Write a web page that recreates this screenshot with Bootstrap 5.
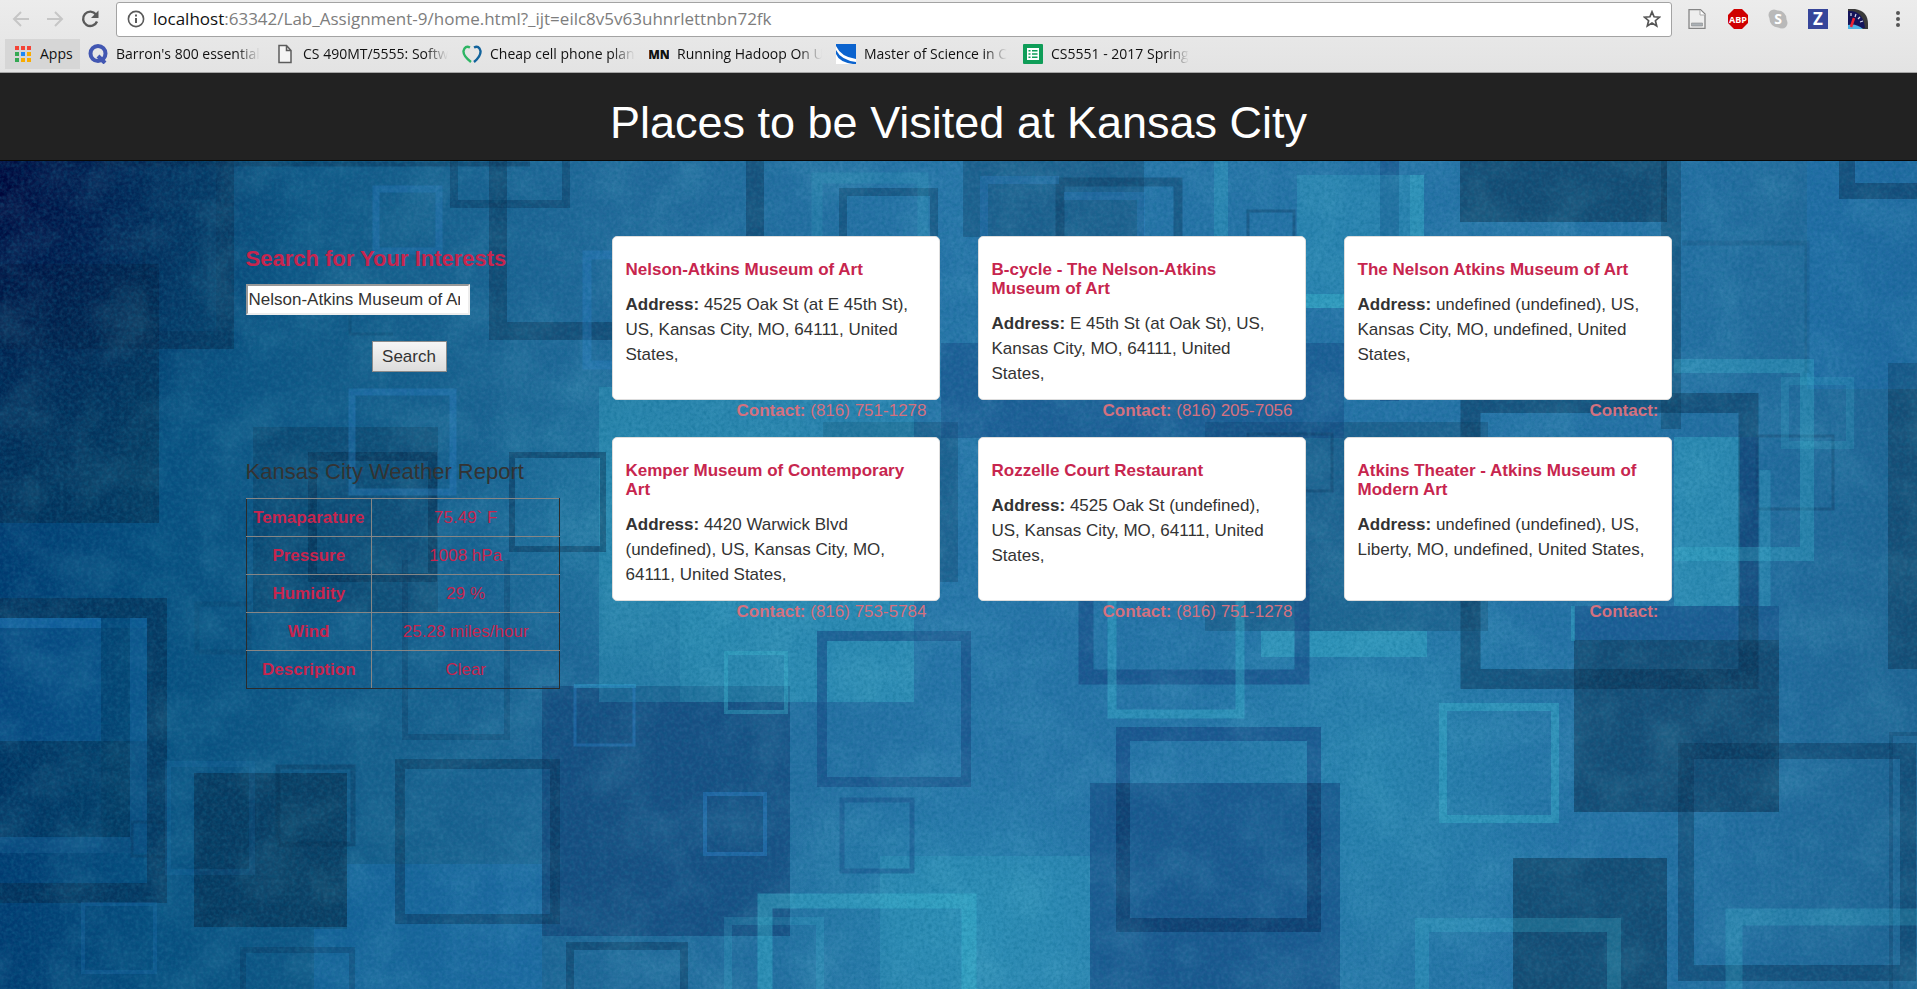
<!DOCTYPE html>
<html lang="en">
<head>
<meta charset="utf-8">
<meta name="viewport" content="width=device-width, initial-scale=1">
<title>Places to be Visited at Kansas City</title>
<link href="https://cdn.jsdelivr.net/npm/bootstrap@5.3.0/dist/css/bootstrap.min.css" rel="stylesheet">
<style>
  body { font-family: "Liberation Sans", Arial, sans-serif; font-size: 17px; line-height: 25px; color: #333; }

  /* browser toolbar */
  .chrome-bar { background: linear-gradient(#ececec, #e3e3e3); border-bottom: 1px solid #a5a5a5; font-family: "Open Sans", sans-serif; color: #111; }
  .tool-row { height: 38px; padding: 0 5px 0 12px; }
  .tool-btn { border: 0; background: none; padding: 0; line-height: 0; }
  .omnibox { height: 35px; background: #fff; border: 1px solid #a3a3a3; border-radius: 3px; padding: 0 10px; font-size: 17px; line-height: 24px; color: #7d7d7d; }
  .omnibox b { font-weight: 400; color: #111; }
  .ext-icons { gap: 20px; }
  .mark-row { height: 34px; padding: 1px 5px 3px; font-size: 14px; line-height: 20px; }
  .mark-row a { color: #111; text-decoration: none; }
  .apps-link { background: #d6d6d6; width: 75px; height: 30px; padding-left: 10px; }
  .site-link { width: 187px; padding-left: 8px; padding-right: 6px; }
  .site-link span { overflow: hidden; white-space: nowrap; -webkit-mask-image: linear-gradient(90deg, #000 84%, transparent); mask-image: linear-gradient(90deg, #000 84%, transparent); }
  .site-link svg { flex: none; }

  /* page */
  .page-head { background: #222; border-bottom: 1px solid #080808; padding: 25px 0 12px; }
  .page-head h1 { font-size: 45px; line-height: 50px; font-weight: 400; color: #fff; }
  .scene { background: #23699e; overflow: hidden; }
  .backdrop { inset: 0; width: 100%; height: 100%; }
  .wrap { max-width: 1464px; --bs-gutter-x: 38px; padding-top: 75px; }
  .wrap .row { --bs-gutter-x: 38px; }
  .crimson { color: #c7254e; }
  .side-head { font-size: 22px; line-height: 25px; }
  .search-form { padding-top: 10px; }
  .search-form label { margin-bottom: 13px; }
  .query { width: 224px; height: 31px; border: 2px solid; border-color: #999 #ededed #ededed #999; border-radius: 0; background: #fff; color: #333; padding: 0 8px 0 1px; }
  .go-line { padding: 26px 0 0 126px; }
  .go { width: 75px; height: 31px; border: 1px solid #8c8c8c; background: linear-gradient(#f6f6f6, #dcdcdc); color: #333; padding: 0; }
  .weather-head { margin: 87px 0 14px; }
  .weather { width: 96%; border: 1px solid #2b2b2b; border-collapse: collapse; text-align: center; color: #c7254e; }
  .weather th, .weather td { height: 38px; border: 1px solid #868686; }
  .weather tr > :first-child { width: 40%; border-left-color: #2b2b2b; }
  .weather tr > :last-child { border-right-color: #2b2b2b; }
  .weather tr:last-child > * { border-bottom-color: #2b2b2b; }
  .place { height: 164px; border: 1px solid #ddd; border-radius: 5px; background: #fff; padding: 23px 21px 11px 13px; }
  .place h2 { font-size: 17px; line-height: 19px; font-weight: 700; margin-bottom: 13px; }
  .contact { color: #d4717f; line-height: 22px; padding-right: 13px; margin-bottom: 15px; }
</style>
</head>
<body class="d-flex flex-column min-vh-100">

<header class="chrome-bar">
  <div class="tool-row d-flex align-items-center">
    <button class="tool-btn" aria-label="Back"><svg width="18" height="18" fill="none" stroke="#c6c6c6" stroke-width="2"><path d="M17 9H2M9 2L2 9l7 7"/></svg></button>
    <button class="tool-btn ms-3" aria-label="Forward"><svg width="18" height="18" fill="none" stroke="#c6c6c6" stroke-width="2"><path d="M1 9h15M9 2l7 7-7 7"/></svg></button>
    <button class="tool-btn ms-3" aria-label="Reload"><svg width="20" height="20" fill="none" stroke="#5a5a5a" stroke-width="2.4"><path d="M16 5.4A7.2 7.2 0 1 0 17 12.500"/><path d="M18.500 1.500v7.500H11z" fill="#5a5a5a" stroke="none"/></svg></button>
    <div class="omnibox d-flex align-items-center flex-grow-1 ms-3 me-3">
      <svg width="18" height="18" class="me-2" fill="none" stroke="#5a5a5a" stroke-width="1.6"><circle cx="9" cy="9" r="7.600"/><path d="M9 8v5M9 4.600v2" stroke-width="2"/></svg>
      <div class="flex-grow-1" role="textbox" aria-label="Address" contenteditable="true" spellcheck="false"><b>localhost</b>:63342/Lab_Assignment-9/home.html?_ijt=eilc8v5v63uhnrlettnbn72fk</div>
      <svg width="18" height="18" viewBox="0 0 18 18" fill="none" stroke="#555" stroke-width="1.700"><path d="M9 1.800l2.100 5 5.400.400-4.100 3.500 1.300 5.300L9 13.100 4.300 16l1.300-5.300L1.500 7.200l5.400-.400z"/></svg>
    </div>
    <div class="ext-icons d-flex align-items-center flex-shrink-0 pe-1">
      <button class="tool-btn" aria-label="Page tool"><svg width="20" height="20"><path d="M1 .700h11.500L17 5v14.300H1z" fill="#eee" stroke="#858585" stroke-width="1.300"/><path d="M12 1v5h5" fill="#fff" stroke="#aaa"/><path d="M3.500 14h11v3h-11z" fill="#aab0b5" stroke="#8b8b8b" stroke-width=".6"/></svg></button>
      <button class="tool-btn" aria-label="Ad blocker"><svg width="20" height="20"><path d="M6 0h8l6 6v8l-6 6H6l-6-6V6z" fill="#cf0000"/><text x="10" y="13.500" text-anchor="middle" font-family="Open Sans" font-weight="700" font-size="9" fill="#fff">ABP</text></svg></button>
      <button class="tool-btn" aria-label="Skype"><svg width="20" height="20"><circle cx="6" cy="6" r="5.500" fill="#b9b9b9"/><circle cx="14" cy="14" r="5.500" fill="#b9b9b9"/><circle cx="10" cy="10" r="8.500" fill="#b9b9b9"/><text x="10" y="15" text-anchor="middle" font-family="Open Sans" font-weight="700" font-size="14" fill="#fff">S</text></svg></button>
      <button class="tool-btn" aria-label="Z extension"><svg width="20" height="20"><path d="M0 0h20v20H0z" fill="#36459a"/><text x="10" y="16" text-anchor="middle" font-family="Open Sans" font-weight="700" font-size="17" fill="#fff">Z</text></svg></button>
      <button class="tool-btn" aria-label="Speed dial"><svg width="20" height="20"><path d="M0 0h7q13 2 13 15v5H0z" fill="#3a3a3a"/><path d="M0 2q15-1 17 17H0z" fill="#14145a"/><path d="M0 16q8-2 15 4H0z" fill="#4db4e6"/><path d="M3 18L6 9" stroke="#ee2232" stroke-width="2.500"/><path d="M3 4v3M8 5l-1 3M12 8l-2 2M15 12l-3 1" stroke="#dde" stroke-width="1.200"/></svg></button>
      <button class="tool-btn px-2" aria-label="Menu"><svg width="4" height="18" fill="#555"><circle cx="2" cy="3" r="2"/><circle cx="2" cy="9" r="2"/><circle cx="2" cy="15" r="2"/></svg></button>
    </div>
  </div>
  <nav class="mark-row d-flex align-items-center" aria-label="Bookmarks">
    <a href="#" class="apps-link d-flex align-items-center gap-2"><svg width="17" height="17"><g fill="#f44336"><path d="M0 0h4v4H0zM6 0h4v4H6zM12 0h4v4h-4z"/></g><path d="M0 6h4v4H0zM0 12h4v4H0z" fill="#34a853"/><path d="M6 6h4v4H6z" fill="#1e88f5"/><path d="M12 6h4v4h-4zM6 12h4v4H6zM12 12h4v4h-4z" fill="#f9ab00"/></svg>Apps</a>
    <a href="#" class="site-link d-flex align-items-center gap-2"><svg width="20" height="20" fill="none" stroke="#4257b2" stroke-width="4"><circle cx="10" cy="9.500" r="7.500"/><path d="M10 12l7 7"/></svg><span>Barron's 800 essential</span></a>
    <a href="#" class="site-link d-flex align-items-center gap-2"><svg width="20" height="20" fill="#f5f5f5" stroke="#5c5c5c" stroke-width="1.500"><path d="M4 1.500h7.500L16 6.500v12H4zM11.500 1.500v5H16"/></svg><span>CS 490MT/5555: Softw</span></a>
    <a href="#" class="site-link d-flex align-items-center gap-2"><svg width="20" height="20" fill="none" stroke-width="2.400"><path d="M9 18Q1 12 1.500 7 3 1 8 3.500" stroke="#2db564"/><path d="M12 18Q19 12 18.500 7 17 1 12 3.500" stroke="#12639c"/></svg><span>Cheap cell phone plan</span></a>
    <a href="#" class="site-link d-flex align-items-center gap-2"><svg width="20" height="20"><text x="10" y="15" text-anchor="middle" font-family="Open Sans" font-weight="800" font-size="12" fill="#111">MN</text></svg><span>Running Hadoop On U</span></a>
    <a href="#" class="site-link d-flex align-items-center gap-2"><svg width="20" height="20"><path d="M0 0h20v20H0z" fill="#0b63ce"/><path d="M0 2q5 11 20 13v3Q5 16 0 6zM0 10q3 8 17 10H0z" fill="#fff"/></svg><span>Master of Science in C</span></a>
    <a href="#" class="site-link d-flex align-items-center gap-2"><svg width="20" height="20"><rect width="20" height="20" rx="1" fill="#0f9d58"/><path d="M4 4h12v12H4z" fill="#fff"/><path d="M5.500 6h2v1.500h-2zM9 6h5.500v1.500H9zM5.500 9.200h2v1.500h-2zM9 9.200h5.500v1.500H9zM5.500 12.500h2V14h-2zM9 12.500h5.500V14H9z" fill="#0f9d58"/></svg><span>CS5551 - 2017 Spring</span></a>
  </nav>
</header>

<div class="page-head text-center"><h1 class="m-0">Places to be Visited at Kansas City</h1></div>

<main class="scene position-relative flex-grow-1">
  <svg class="backdrop position-absolute" viewBox="0 161 1917 828" preserveAspectRatio="xMidYMid slice" aria-hidden="true">
    <defs>
      <linearGradient id="base"><stop offset="0" stop-color="#013a70"/><stop offset=".08" stop-color="#074d7e"/><stop offset=".2" stop-color="#165c8a"/><stop offset=".32" stop-color="#226899"/><stop offset=".5" stop-color="#2874a8"/><stop offset=".85" stop-color="#2671a5"/><stop offset="1" stop-color="#216494"/></linearGradient>
      <radialGradient id="corner" gradientUnits="userSpaceOnUse" cx="0" cy="190" r="300"><stop offset="0" stop-color="#000035" stop-opacity=".9"/><stop offset="1" stop-color="#00204f" stop-opacity="0"/></radialGradient>
      <radialGradient id="glow"><stop offset="0" stop-color="#35b0c8" stop-opacity=".3"/><stop offset="1" stop-color="#35b0c8" stop-opacity="0"/></radialGradient>
      <filter id="grain" x="0" y="0" width="100%" height="100%"><feTurbulence type="fractalNoise" baseFrequency=".28" numOctaves="3" seed="4"/><feColorMatrix values="0 0 0 0 0  0 0 0 0 .12  0 0 0 0 .24  1.600 0 0 0 -.6"/></filter>
      <filter id="sparkle" x="0" y="0" width="100%" height="100%"><feTurbulence type="fractalNoise" baseFrequency=".25" numOctaves="3" seed="17"/><feColorMatrix values="0 0 0 0 .18  0 0 0 0 .56  0 0 0 0 .76  0 1.600 0 0 -.6"/></filter>
      <filter id="cloud" x="0" y="0" width="100%" height="100%"><feTurbulence type="fractalNoise" baseFrequency=".02" numOctaves="6" seed="9"/><feColorMatrix values="0 0 0 0 .2  0 0 0 0 .66  0 0 0 0 .8  0 1.800 0 0 -.75"/></filter>
    </defs>
    <rect y="161" width="1917" height="828" fill="url(#base)"/>
    <ellipse cx="660" cy="500" rx="200" ry="180" fill="url(#glow)"/>
    <ellipse cx="960" cy="920" rx="220" ry="150" fill="url(#glow)"/>
    <ellipse cx="1380" cy="780" rx="200" ry="260" fill="url(#glow)"/>
    <!-- darker solid blocks -->
    <g fill="#041f3a">
      <path d="M0 161h216v170H0z" opacity=".25"/><path d="M0 264h159v259H0z" opacity=".42"/><path d="M0 741h147v112H0z" opacity=".28"/>
      <path d="M253 427h185v185H253z" opacity=".25"/><path d="M194 773h153v154H194z" opacity=".48"/>
      <path d="M963 161h181v76H963z" opacity=".25"/><path d="M1460 161h207v61h-207z" opacity=".48"/>
      <path d="M1574 640h205v172h-205z" opacity=".46"/><path d="M1513 858h154v131h-154z" opacity=".48"/>
      <path d="M823 422h135v160H823zM1205 422h283v209h-283z" opacity=".22"/><path d="M1661 161h20v268h-20z" opacity=".28"/>
      <path d="M1888 363h29v306h-29z" opacity=".35"/><path d="M101 628h46v225h-46z" opacity=".12"/>
      <path d="M542 686h248v250H542z" opacity=".2"/>
    </g>
    <g fill="#123f7a">
      <path d="M542 686h248v250H542z" opacity=".42"/><path d="M1090 783h250v206h-250z" opacity=".55"/><path d="M1574 606h205v34h-205z" opacity=".4"/>
      <path d="M1380 161h19v240h-19z" opacity=".45"/><path d="M941 343h403v95H941z" opacity=".4"/><path d="M599 686h191v16H599z" opacity=".3"/>
    </g>
    <!-- lighter blocks -->
    <g fill="#39b4cc">
      <path d="M599 387h315v315H599z" opacity=".28"/><path d="M680 600h234v102H680z" opacity=".16"/><path d="M880 856h210v133H880z" opacity=".22"/>
      <path d="M1261 631h166v26h-166z" opacity=".45"/><path d="M1297 175h113v133h-113z" opacity=".26"/><path d="M1410 175h14v133h-14z" opacity=".5"/>
      <path d="M1674 437h66v169h-66z" opacity=".4"/><path d="M1214 161h14v75h-14z" opacity=".3"/><path d="M1306 294h40v14h-40z" opacity=".5"/>
    </g>
    <g fill="#1f7cc8">
      <path d="M347 864h195v125H314v-60h33z" opacity=".26"/><path d="M1807 161h110v228h-110z" opacity=".22"/><path d="M0 618h101v10H0z" opacity=".45"/>
      <path d="M130 618h17v235h-17zM0 837h130v16H0z" opacity=".28"/><path d="M0 628h101v113H0z" opacity=".16"/>
    </g>
    <!-- dark outlines -->
    <g fill="none" stroke="#06284a">
      <path d="M225 161v179H0" stroke-width="18" opacity=".5"/><path d="M0 608h157v285H0" stroke-width="20" opacity=".55"/>
      <path d="M498 161v170h257V161" stroke-width="18" opacity=".42"/><path d="M454 161v43h112v-43" stroke-width="8" opacity=".35"/>
      <path d="M843 236v-44h91v44" stroke-width="8" opacity=".35"/><path d="M312.500 456.500h120v121h-120z" stroke-width="9" opacity=".5"/>
      <path d="M512 455h91v94h-91z" stroke-width="6" opacity=".45"/><path d="M405 560v177h102V560" stroke-width="6" opacity=".25"/>
      <path d="M278 767h75v77h-75z" stroke-width="5" opacity=".3"/><path d="M400 764h155v155H400z" stroke-width="10" opacity=".42"/>
      <path d="M570 989v-43h114v43" stroke-width="8" opacity=".4"/><path d="M243 989v-39h109v39" stroke-width="6" opacity=".28"/>
      <path d="M1470.500 403h278v276h-278z" stroke-width="20" opacity=".45"/><path d="M1686 751h222v222h-222z" stroke-width="16" opacity=".4"/>
      <path d="M1847 161v30h70" stroke-width="16" opacity=".45"/><path d="M1060 236v-54h118v54" stroke-width="9" opacity=".35"/>
      <path d="M1757 436h76v73h-76zM1248 434h84v57h-84zM132 822h33v34h-33z" stroke-width="3" opacity=".28"/><path d="M1248 236v-25h46v25" stroke-width="3" opacity=".32"/>
      <path d="M1682 243h125v130M197 604h52v48h-52z" stroke-width="5" opacity=".15"/><path d="M1891 989V734h26" stroke-width="4" opacity=".25"/><path d="M350 284v50h43M100 239h44v44" stroke-width="3" opacity=".2"/>
      <path d="M95 164h435" stroke-width="5" opacity=".4"/>
    </g>
    <g fill="none" stroke="#174782">
      <path d="M822 636h144v146H822z" stroke-width="10" opacity=".6"/><path d="M842 800h70v71h-70z" stroke-width="5" opacity=".45"/>
      <path d="M1086 560v117h216V560" stroke-width="15" opacity=".65"/><path d="M1123 734h191v191h-191z" stroke-width="14" opacity=".65"/>
      <path d="M1749 437v169" stroke-width="18" opacity=".45"/>
    </g>
    <path d="M1123 783v142h191V783" fill="none" stroke="#06284a" stroke-width="14" opacity=".35"/>
    <!-- bright outlines -->
    <g fill="none" stroke="#3cb8d0">
      <path d="M765 989v-88h204v88" stroke-width="15" opacity=".45"/><path d="M728 989v-68h92v68" stroke-width="8" opacity=".22"/>
      <path d="M726 653h60v59h-60z" stroke-width="4" opacity=".38"/><path d="M1112 560v154h128V560" stroke-width="9" opacity=".42"/>
      <path d="M1443 707h112v112h-112z" stroke-width="8" opacity=".42"/><path d="M1422 989v-64h192v64" stroke-width="14" opacity=".28"/>
      <path d="M1734 989v-72h183" stroke-width="17" opacity=".28"/><path d="M1674 366h133v188h-133" stroke-width="14" opacity=".32"/>
      <path d="M1785 381h65v64h-65z" stroke-width="8" opacity=".2"/><path d="M1573 606v35M574 686h62" stroke-width="4" opacity=".4"/>
      <path d="M1765 470v136" stroke-width="11" opacity=".28"/><path d="M817 236v-58h106v58" stroke-width="11" opacity=".16"/>
    </g>
    <g fill="none" stroke="#2a7cc4">
      <path d="M376 189h63v62h-63z" stroke-width="7" opacity=".35"/><path d="M352 392h101v100H352z" stroke-width="7" opacity=".4"/>
      <path d="M613 255h-26v110h26" stroke-width="9" opacity=".4"/><path d="M705 794h60v60h-60z" stroke-width="4" opacity=".5"/>
      <path d="M575 686h59v59h-59z" stroke-width="3" opacity=".45"/><path d="M168 764h84v108h-84z" stroke-width="6" opacity=".14"/>
      <path d="M83 904h72v68H83z" stroke-width="4" opacity=".22"/><path d="M984 236v-56h75M1064 196h77v40" stroke-width="8" opacity=".35"/>
    </g>
    <rect y="161" width="1917" height="828" fill="url(#corner)"/>
    <rect y="161" width="1917" height="828" filter="url(#cloud)" opacity=".16"/>
    <rect y="161" width="1917" height="828" filter="url(#grain)" opacity=".4"/>
    <rect y="161" width="1917" height="828" filter="url(#sparkle)" opacity=".14"/>
  </svg>

  <div class="container-fluid wrap position-relative">
    <div class="row">
      <section class="col-3">
        <form onsubmit="return false" class="search-form">
          <label for="q" class="side-head crimson fw-bold d-block">Search for Your Interests</label>
          <input id="q" class="query d-block" type="text" value="Nelson-Atkins Museum of Art">
          <div class="go-line"><button class="go" type="submit">Search</button></div>
        </form>
        <h2 class="side-head weather-head fw-normal">Kansas City Weather Report</h2>
        <table class="weather">
          <tr><th scope="row">Temaparature</th><td>75.49` F</td></tr>
          <tr><th scope="row">Pressure</th><td>1008 hPa</td></tr>
          <tr><th scope="row">Humidity</th><td>29 %</td></tr>
          <tr><th scope="row">Wind</th><td>25.28 miles/hour</td></tr>
          <tr><th scope="row">Description</th><td>Clear</td></tr>
        </table>
      </section>
      <section class="col-9">
        <div class="row">
          <div class="col-4"><article class="place"><h2 class="crimson">Nelson-Atkins Museum of Art</h2><p class="m-0"><b>Address:</b> 4525 Oak St (at E 45th St), US, Kansas City, MO, 64111, United States,</p></article><p class="contact text-end"><b>Contact:</b> (816) 751-1278</p></div>
          <div class="col-4"><article class="place"><h2 class="crimson">B-cycle - The Nelson-Atkins Museum of Art</h2><p class="m-0"><b>Address:</b> E 45th St (at Oak St), US, Kansas City, MO, 64111, United States,</p></article><p class="contact text-end"><b>Contact:</b> (816) 205-7056</p></div>
          <div class="col-4"><article class="place"><h2 class="crimson">The Nelson Atkins Museum of Art</h2><p class="m-0"><b>Address:</b> undefined (undefined), US, Kansas City, MO, undefined, United States,</p></article><p class="contact text-end"><b>Contact:</b></p></div>
          <div class="col-4"><article class="place"><h2 class="crimson">Kemper Museum of Contemporary Art</h2><p class="m-0"><b>Address:</b> 4420 Warwick Blvd (undefined), US, Kansas City, MO, 64111, United States,</p></article><p class="contact text-end"><b>Contact:</b> (816) 753-5784</p></div>
          <div class="col-4"><article class="place"><h2 class="crimson">Rozzelle Court Restaurant</h2><p class="m-0"><b>Address:</b> 4525 Oak St (undefined), US, Kansas City, MO, 64111, United States,</p></article><p class="contact text-end"><b>Contact:</b> (816) 751-1278</p></div>
          <div class="col-4"><article class="place"><h2 class="crimson">Atkins Theater - Atkins Museum of Modern Art</h2><p class="m-0"><b>Address:</b> undefined (undefined), US, Liberty, MO, undefined, United States,</p></article><p class="contact text-end"><b>Contact:</b></p></div>
        </div>
      </section>
    </div>
  </div>
</main>
<script src="https://cdn.jsdelivr.net/npm/bootstrap@5.3.0/dist/js/bootstrap.bundle.min.js"></script>
</body>
</html>
